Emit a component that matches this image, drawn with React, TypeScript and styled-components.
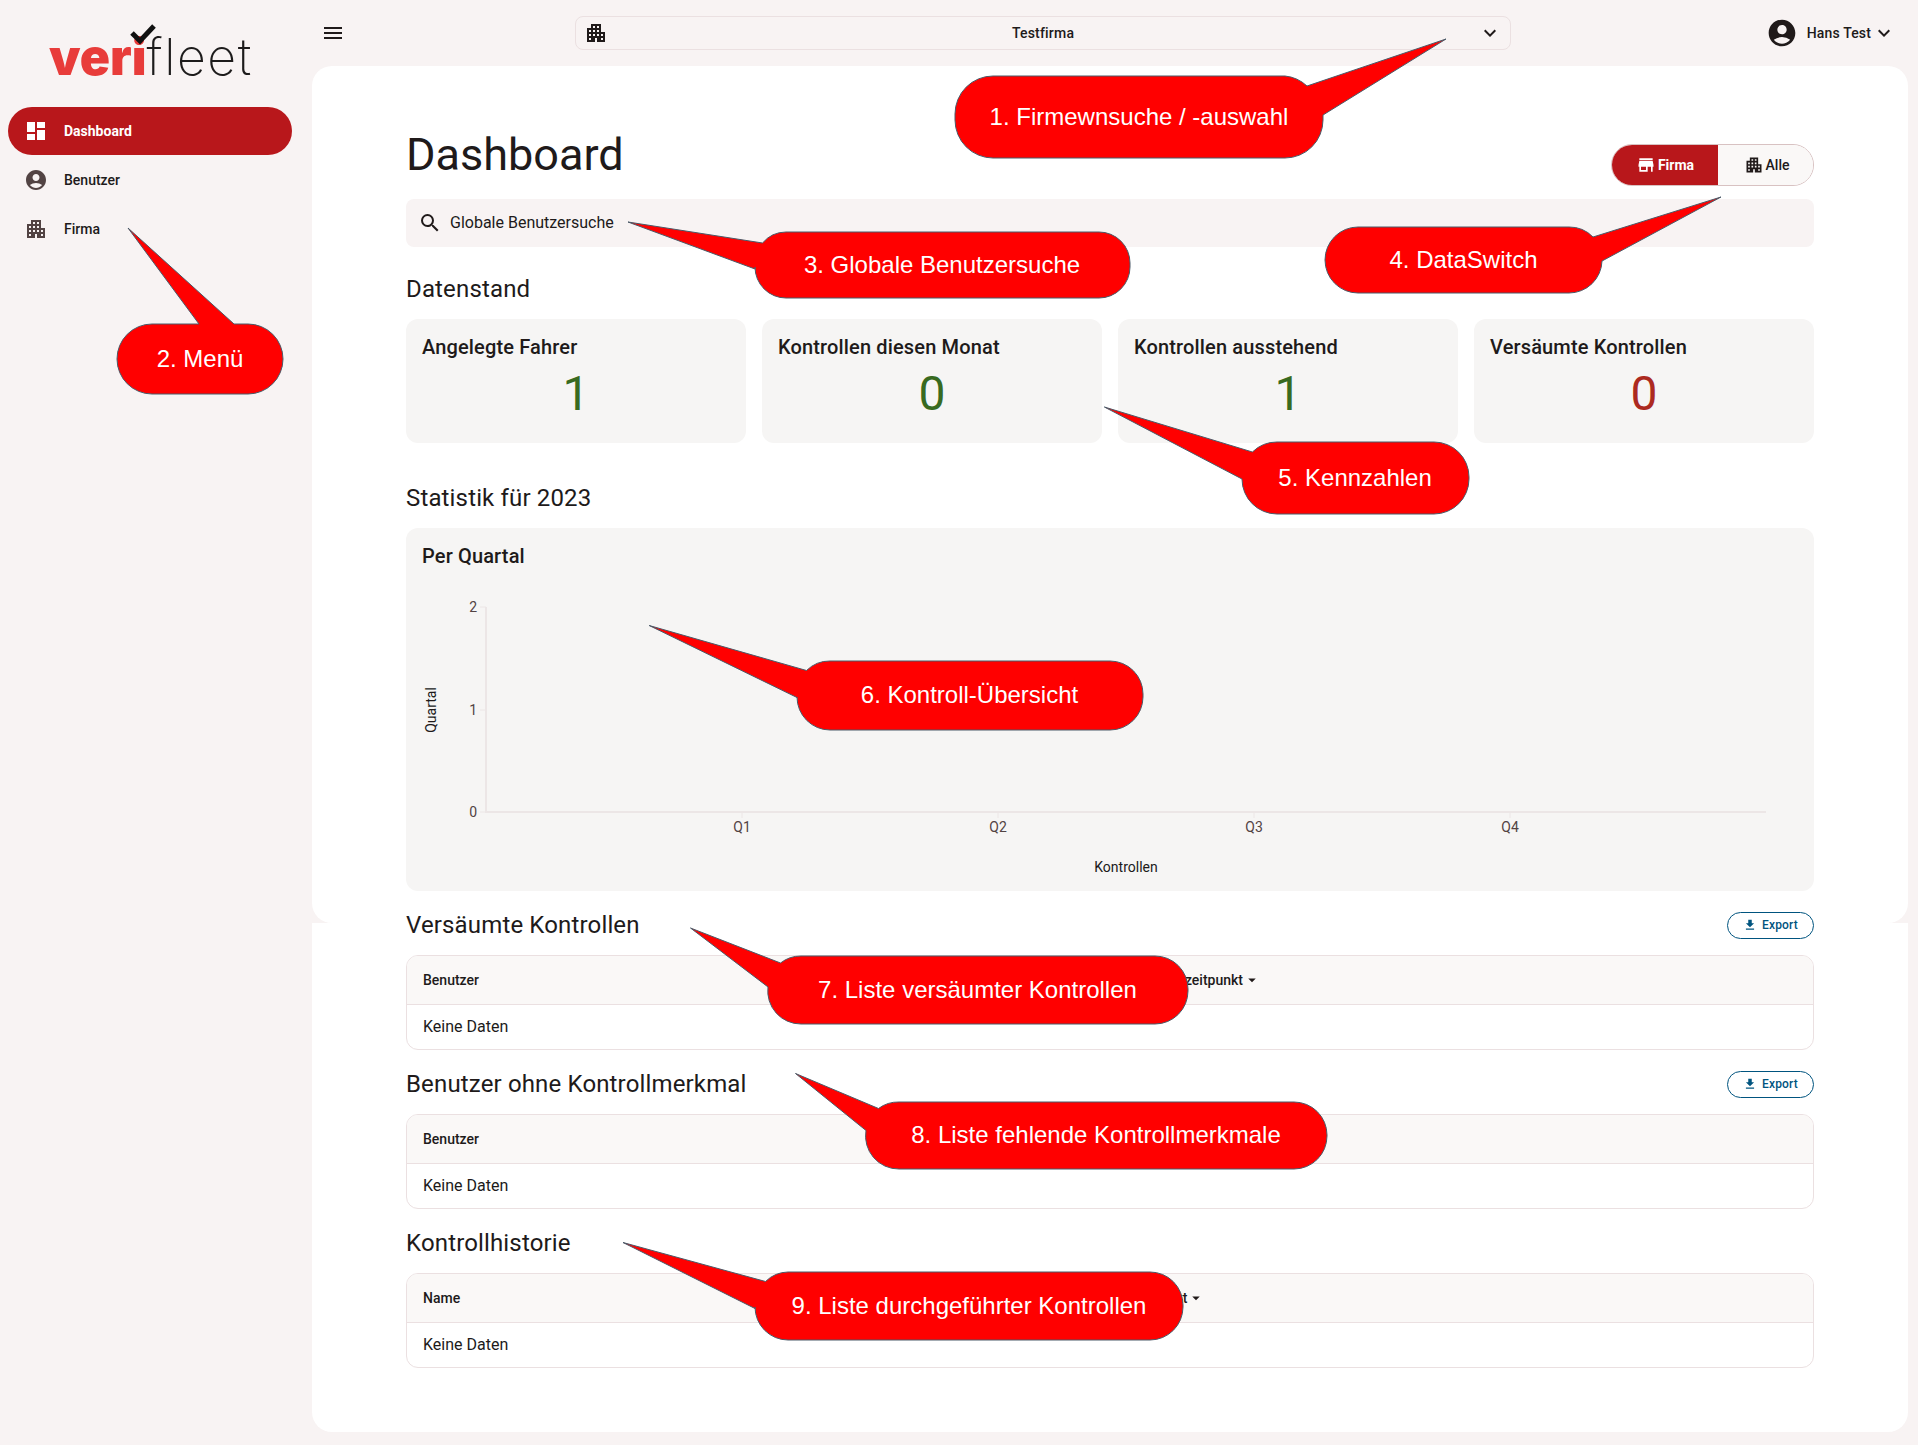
import React from "react";
import styled, { createGlobalStyle } from "styled-components";
import {
  MdDashboard,
  MdAccountCircle,
  MdApartment,
  MdMenu,
  MdKeyboardArrowDown,
  MdSearch,
  MdStore,
  MdFileDownload,
  MdArrowDropDown,
} from "react-icons/md";

const Global = createGlobalStyle`
  html, body { margin: 0; padding: 0; background: #f8f3f3; }
  body { font-family: Roboto, "Liberation Sans", sans-serif; color: #201a1a; }
  * { box-sizing: border-box; }
`;

const Page = styled.div`
  position: relative;
  width: 1918px;
  height: 1445px;
  display: grid;
  grid-template-columns: 312px 1fr;
  overflow: hidden;
  background: #f8f3f3;
`;

const Sidebar = styled.aside`
  display: flex;
  flex-direction: column;
  padding: 0 20px 0 8px;
`;

const Logo = styled.div`
  position: relative;
  height: 107px;
  padding: 29px 0 0 41px;
  font-family: Inter, sans-serif;
  font-size: 50px;
  line-height: 56px;
  white-space: nowrap;
`;

const LogoBold = styled.span`
  color: #e83c3a;
  font-weight: 900;
  letter-spacing: 0;
`;

const LogoThin = styled.span`
  color: #1d1b1b;
  font-weight: 200;
  letter-spacing: 1.6px;
`;

const LogoCheck = styled.svg`
  position: absolute;
  left: 116px;
  top: 20px;
`;

const Nav = styled.nav`
  display: flex;
  flex-direction: column;
  gap: 1px;
`;

const NavItem = styled.div<{ $active?: boolean }>`
  display: flex;
  align-items: center;
  gap: 16px;
  height: 48px;
  padding-left: 16px;
  border-radius: 24px;
  font-size: 14px;
  font-weight: ${(p) => (p.$active ? 700 : 500)};
  color: ${(p) => (p.$active ? "#ffffff" : "#201a1a")};
  background: ${(p) => (p.$active ? "#b8171b" : "transparent")};
  svg {
    color: ${(p) => (p.$active ? "#ffffff" : "#524343")};
  }
`;

const Main = styled.main`
  display: flex;
  flex-direction: column;
  padding-right: 10px;
`;

const TopBar = styled.header`
  height: 66px;
  flex: none;
  display: flex;
  align-items: center;
  padding: 0 12px 0 9px;
`;

const IconButton = styled.div`
  width: 24px;
  height: 24px;
  display: flex;
  color: #201a1a;
`;

const CompanySelect = styled.div`
  margin-left: 230px;
  width: 936px;
  height: 34px;
  border: 1px solid #ebe0e1;
  border-radius: 8px;
  display: flex;
  align-items: center;
  padding: 0 8px 0 8px;
  font-size: 14px;
  font-weight: 500;
  letter-spacing: 0.2px;
`;

const CompanyName = styled.span`
  flex: 1;
  text-align: center;
`;

const UserMenu = styled.div`
  margin-left: auto;
  display: flex;
  align-items: center;
  font-size: 14px;
  font-weight: 500;
  letter-spacing: 0.15px;
  gap: 9px;
`;

const UserChevron = styled.span`
  display: flex;
  margin-left: -8px;
`;

const Panel = styled.section`
  height: 857px;
  flex: none;
  background: #ffffff;
  border-radius: 20px;
  padding: 51px 94px 0;
`;

const PanelLower = styled.section`
  flex: 1;
  margin-bottom: 13px;
  background: #ffffff;
  border-radius: 0 0 20px 20px;
  padding: 0 94px;
`;

const TitleRow = styled.div`
  height: 69px;
  display: flex;
  justify-content: space-between;
  align-items: flex-end;
`;

const Title = styled.h1`
  margin: 0 0 5px;
  font-size: 45px;
  line-height: 52px;
  font-weight: 400;
  color: #201a1a;
`;

const Switch = styled.div`
  width: 203px;
  height: 42px;
  display: grid;
  grid-template-columns: 106px 97px;
  border: 1px solid #d8c2c2;
  border-radius: 21px;
  overflow: hidden;
`;

const SwitchOption = styled.div<{ $on?: boolean }>`
  display: flex;
  align-items: center;
  justify-content: center;
  gap: 2px;
  font-size: 14px;
  font-weight: ${(p) => (p.$on ? 700 : 500)};
  color: ${(p) => (p.$on ? "#ffffff" : "#201a1a")};
  background: ${(p) => (p.$on ? "#b8171b" : "#faf8f7")};
`;

const SearchBar = styled.div`
  margin-top: 13px;
  height: 48px;
  background: #f8f3f3;
  border-radius: 8px;
  display: flex;
  align-items: center;
  gap: 8px;
  padding: 0 0 1px 12px;
  font-size: 16px;
  color: #201a1a;
`;

const SectionTitle = styled.h2`
  margin: 0;
  font-size: 24px;
  line-height: 32px;
  font-weight: 400;
  letter-spacing: 0.15px;
  color: #201a1a;
`;

const Datenstand = styled(SectionTitle)`
  margin-top: 26px;
`;

const Statistik = styled(SectionTitle)`
  margin-top: 39px;
`;

const CardGrid = styled.div`
  margin-top: 14px;
  display: grid;
  grid-template-columns: repeat(4, 1fr);
  gap: 16px;
`;

const Card = styled.div`
  height: 124px;
  background: #f6f5f4;
  border-radius: 12px;
  padding: 14px 16px;
`;

const CardTitle = styled.div`
  font-size: 20px;
  line-height: 28px;
  font-weight: 500;
  letter-spacing: 0.15px;
  color: #201a1a;
`;

const CardValue = styled.div<{ $bad?: boolean }>`
  margin-top: 7px;
  text-align: center;
  font-size: 48px;
  line-height: 52px;
  font-weight: 400;
  color: ${(p) => (p.$bad ? "#ac2a20" : "#386a20")};
`;

const ChartCard = styled(Card)`
  height: 363px;
  margin-top: 14px;
  position: relative;
`;

const Chart = styled.svg`
  position: absolute;
  left: 0;
  top: 0;
  font-family: Roboto, sans-serif;
`;

const ListHead = styled.div`
  height: 32px;
  display: flex;
  align-items: center;
  justify-content: space-between;
`;

const ExportButton = styled.div`
  width: 87px;
  height: 27px;
  display: flex;
  align-items: center;
  justify-content: center;
  gap: 5px;
  border: 1px solid #00547f;
  border-radius: 14px;
  color: #00547f;
  font-size: 12px;
  font-weight: 500;
  letter-spacing: 0.2px;
`;

const ListSection = styled.div<{ $top: number }>`
  margin-top: ${(p) => p.$top}px;
`;

const Table = styled.div`
  margin-top: 14px;
  height: 95px;
  border: 1px solid #ebe0e1;
  border-radius: 12px;
  overflow: hidden;
`;

const TableHeader = styled.div`
  height: 49px;
  display: grid;
  grid-template-columns: 1fr 1fr;
  align-items: center;
  padding-left: 16px;
  background: #faf8f7;
  border-bottom: 1px solid #ebe0e1;
  font-size: 14px;
  font-weight: 500;
`;

const HeaderCell = styled.div`
  display: flex;
  align-items: center;
`;

const SortCell = styled(HeaderCell)<{ $pad: number }>`
  padding-left: ${(p) => p.$pad}px;
`;

const TableEmpty = styled.div`
  height: 44px;
  display: flex;
  align-items: center;
  padding: 0 0 2px 16px;
  font-size: 16px;
`;

const CalloutBox = styled.div<{ $x: number; $y: number; $w: number; $h: number }>`
  position: absolute;
  left: ${(p) => p.$x}px;
  top: ${(p) => p.$y}px;
  width: ${(p) => p.$w}px;
  height: ${(p) => p.$h}px;
  display: flex;
  align-items: center;
  justify-content: center;
  font-family: "Liberation Sans", Arial, sans-serif;
  font-size: 24px;
  color: #ffffff;
  white-space: nowrap;
`;

const CalloutShape = styled.svg`
  position: absolute;
  left: 0;
  top: 0;
  overflow: visible;
`;

const CalloutLabel = styled.span`
  position: relative;
`;

type Pt = [number, number];

type CalloutProps = {
  box: [number, number, number, number];
  r: number;
  tip: Pt;
  a: Pt;
  b: Pt;
  side: "left" | "right" | "top";
  children: React.ReactNode;
};

function calloutPath(w: number, h: number, r: number, tip: Pt, a: Pt, b: Pt, side: CalloutProps["side"]) {
  const arc = (x: number, y: number) => `A${r} ${r} 0 0 1 ${x} ${y}`;
  if (side === "top") {
    return `M${r} 0 L${b[0]} ${b[1]} L${tip[0]} ${tip[1]} L${a[0]} ${a[1]} L${w - r} 0 ${arc(w, r)} L${w} ${h - r} ${arc(w - r, h)} L${r} ${h} ${arc(0, h - r)} L0 ${r} ${arc(r, 0)}Z`;
  }
  if (side === "right") {
    const y = Math.max(b[1], h - r);
    return `M${r} 0 L${w - r} 0 ${arc(a[0], a[1])} L${tip[0]} ${tip[1]} L${b[0]} ${b[1]} L${w} ${y} ${arc(w - r, h)} L${r} ${h} ${arc(0, h - r)} L0 ${r} ${arc(r, 0)}Z`;
  }
  const y = Math.min(b[1], h - r);
  return `M${r} 0 L${w - r} 0 ${arc(w, r)} L${w} ${h - r} ${arc(w - r, h)} L${r} ${h} ${arc(0, y)} L${b[0]} ${b[1]} L${tip[0]} ${tip[1]} L${a[0]} ${a[1]} ${arc(r, 0)}Z`;
}

function Callout({ box, r, tip, a, b, side, children }: CalloutProps) {
  const [x, y, w, h] = box;
  const rel = (p: Pt): Pt => [p[0] - x, p[1] - y];
  const d = calloutPath(w, h, r, rel(tip), rel(a), rel(b), side);
  return (
    <CalloutBox $x={x} $y={y} $w={w} $h={h}>
      <CalloutShape width={w} height={h}>
        <path d={d} fill="#ff0000" stroke="#4a5a68" strokeWidth="1" />
      </CalloutShape>
      <CalloutLabel>{children}</CalloutLabel>
    </CalloutBox>
  );
}

const cards = [
  { title: "Angelegte Fahrer", value: "1" },
  { title: "Kontrollen diesen Monat", value: "0" },
  { title: "Kontrollen ausstehend", value: "1" },
  { title: "Versäumte Kontrollen", value: "0", bad: true },
];

export default function App() {
  return (
    <Page>
      <Global />
      <Sidebar>
        <Logo>
          <LogoBold>veri</LogoBold>
          <LogoThin>fleet</LogoThin>
          <LogoCheck width="34" height="26" viewBox="0 0 34 26">
            <path d="M8 13 L16 21 L30 6" fill="none" stroke="#111" strokeWidth="5" />
          </LogoCheck>
        </Logo>
        <Nav>
          <NavItem $active>
            <MdDashboard size={24} />
            Dashboard
          </NavItem>
          <NavItem>
            <MdAccountCircle size={24} />
            Benutzer
          </NavItem>
          <NavItem>
            <MdApartment size={24} />
            Firma
          </NavItem>
        </Nav>
      </Sidebar>
      <Main>
        <TopBar>
          <IconButton>
            <MdMenu size={24} />
          </IconButton>
          <CompanySelect>
            <MdApartment size={24} />
            <CompanyName>Testfirma</CompanyName>
            <MdKeyboardArrowDown size={24} />
          </CompanySelect>
          <UserMenu>
            <MdAccountCircle size={32} />
            <span>Hans Test</span>
            <UserChevron>
              <MdKeyboardArrowDown size={24} />
            </UserChevron>
          </UserMenu>
        </TopBar>
        <Panel>
          <TitleRow>
            <Title>Dashboard</Title>
            <Switch>
              <SwitchOption $on>
                <MdStore size={20} />
                Firma
              </SwitchOption>
              <SwitchOption>
                <MdApartment size={20} />
                Alle
              </SwitchOption>
            </Switch>
          </TitleRow>
          <SearchBar>
            <MdSearch size={24} />
            Globale Benutzersuche
          </SearchBar>
          <Datenstand>Datenstand</Datenstand>
          <CardGrid>
            {cards.map((c) => (
              <Card key={c.title}>
                <CardTitle>{c.title}</CardTitle>
                <CardValue $bad={c.bad}>{c.value}</CardValue>
              </Card>
            ))}
          </CardGrid>
          <Statistik>Statistik für 2023</Statistik>
          <ChartCard>
            <CardTitle>Per Quartal</CardTitle>
            <Chart width="1408" height="363" viewBox="0 0 1408 363">
              <g stroke="#ece6e6" strokeWidth="2" fill="none">
                <path d="M80 79 V284 H1360" />
                <path d="M74 79 H80 M74 182 H80 M74 284 H80" strokeWidth="1" />
                <path d="M336 284 V290 M592 284 V290 M848 284 V290 M1104 284 V290" strokeWidth="1" />
              </g>
              <g fontSize="14" fill="#524343" textAnchor="end">
                <text x="71" y="84">2</text>
                <text x="71" y="187">1</text>
                <text x="71" y="289">0</text>
              </g>
              <g fontSize="14" fill="#524343" textAnchor="middle">
                <text x="336" y="304">Q1</text>
                <text x="592" y="304">Q2</text>
                <text x="848" y="304">Q3</text>
                <text x="1104" y="304">Q4</text>
              </g>
              <text x="720" y="344" fontSize="14" fill="#201a1a" textAnchor="middle">Kontrollen</text>
              <text transform="translate(30 182) rotate(-90)" fontSize="14" fill="#201a1a" textAnchor="middle">Quartal</text>
            </Chart>
          </ChartCard>
        </Panel>
        <PanelLower>
          <ListSection $top={-14}>
            <ListHead>
              <SectionTitle>Versäumte Kontrollen</SectionTitle>
              <ExportButton>
                <MdFileDownload size={14} />
                Export
              </ExportButton>
            </ListHead>
            <Table>
              <TableHeader>
                <HeaderCell>Benutzer</HeaderCell>
                <SortCell $pad={18}>
                  Kontrollzeitpunkt
                  <MdArrowDropDown size={18} />
                </SortCell>
              </TableHeader>
              <TableEmpty>Keine Daten</TableEmpty>
            </Table>
          </ListSection>
          <ListSection $top={18}>
            <ListHead>
              <SectionTitle>Benutzer ohne Kontrollmerkmal</SectionTitle>
              <ExportButton>
                <MdFileDownload size={14} />
                Export
              </ExportButton>
            </ListHead>
            <Table>
              <TableHeader>
                <HeaderCell>Benutzer</HeaderCell>
              </TableHeader>
              <TableEmpty>Keine Daten</TableEmpty>
            </Table>
          </ListSection>
          <ListSection $top={18}>
            <ListHead>
              <SectionTitle>Kontrollhistorie</SectionTitle>
            </ListHead>
            <Table>
              <TableHeader>
                <HeaderCell>Name</HeaderCell>
                <SortCell $pad={10}>
                  Zeitpunkt
                  <MdArrowDropDown size={18} />
                </SortCell>
              </TableHeader>
              <TableEmpty>Keine Daten</TableEmpty>
            </Table>
          </ListSection>
        </PanelLower>
      </Main>
      <Callout side="right" box={[955, 76, 368, 82]} r={38} tip={[1446, 39]} a={[1307, 86]} b={[1323, 115]}>1. Firmewnsuche / -auswahl</Callout>
      <Callout side="top" box={[117, 324, 166, 70]} r={35} tip={[128, 228]} a={[234, 324]} b={[199, 324]}>2. Menü</Callout>
      <Callout side="left" box={[754.5, 232, 375, 66]} r={31} tip={[627.5, 222]} a={[762, 243]} b={[754.5, 269]}>3. Globale Benutzersuche</Callout>
      <Callout side="right" box={[1325, 227, 277, 66]} r={33} tip={[1721, 197]} a={[1593, 237]} b={[1602, 261]}>4. DataSwitch</Callout>
      <Callout side="left" box={[1241.6, 442, 227, 72]} r={35} tip={[1104, 407]} a={[1252, 452]} b={[1241.6, 479]}>5. Kennzahlen</Callout>
      <Callout side="left" box={[796.5, 660.5, 346, 69]} r={33} tip={[648.7, 625]} a={[806, 670]} b={[796.5, 697]}>6. Kontroll-Übersicht</Callout>
      <Callout side="left" box={[767.5, 956, 420, 68]} r={33} tip={[690, 928]} a={[780, 963]} b={[767.5, 987]}>7. Liste versäumter Kontrollen</Callout>
      <Callout side="left" box={[865.5, 1101.5, 461, 67]} r={33} tip={[795, 1073]} a={[878, 1108]} b={[865.5, 1130]}>8. Liste fehlende Kontrollmerkmale</Callout>
      <Callout side="left" box={[755, 1271.5, 428, 68]} r={33} tip={[623, 1242]} a={[765.5, 1281]} b={[755, 1308]}>9. Liste durchgeführter Kontrollen</Callout>
    </Page>
  );
}
